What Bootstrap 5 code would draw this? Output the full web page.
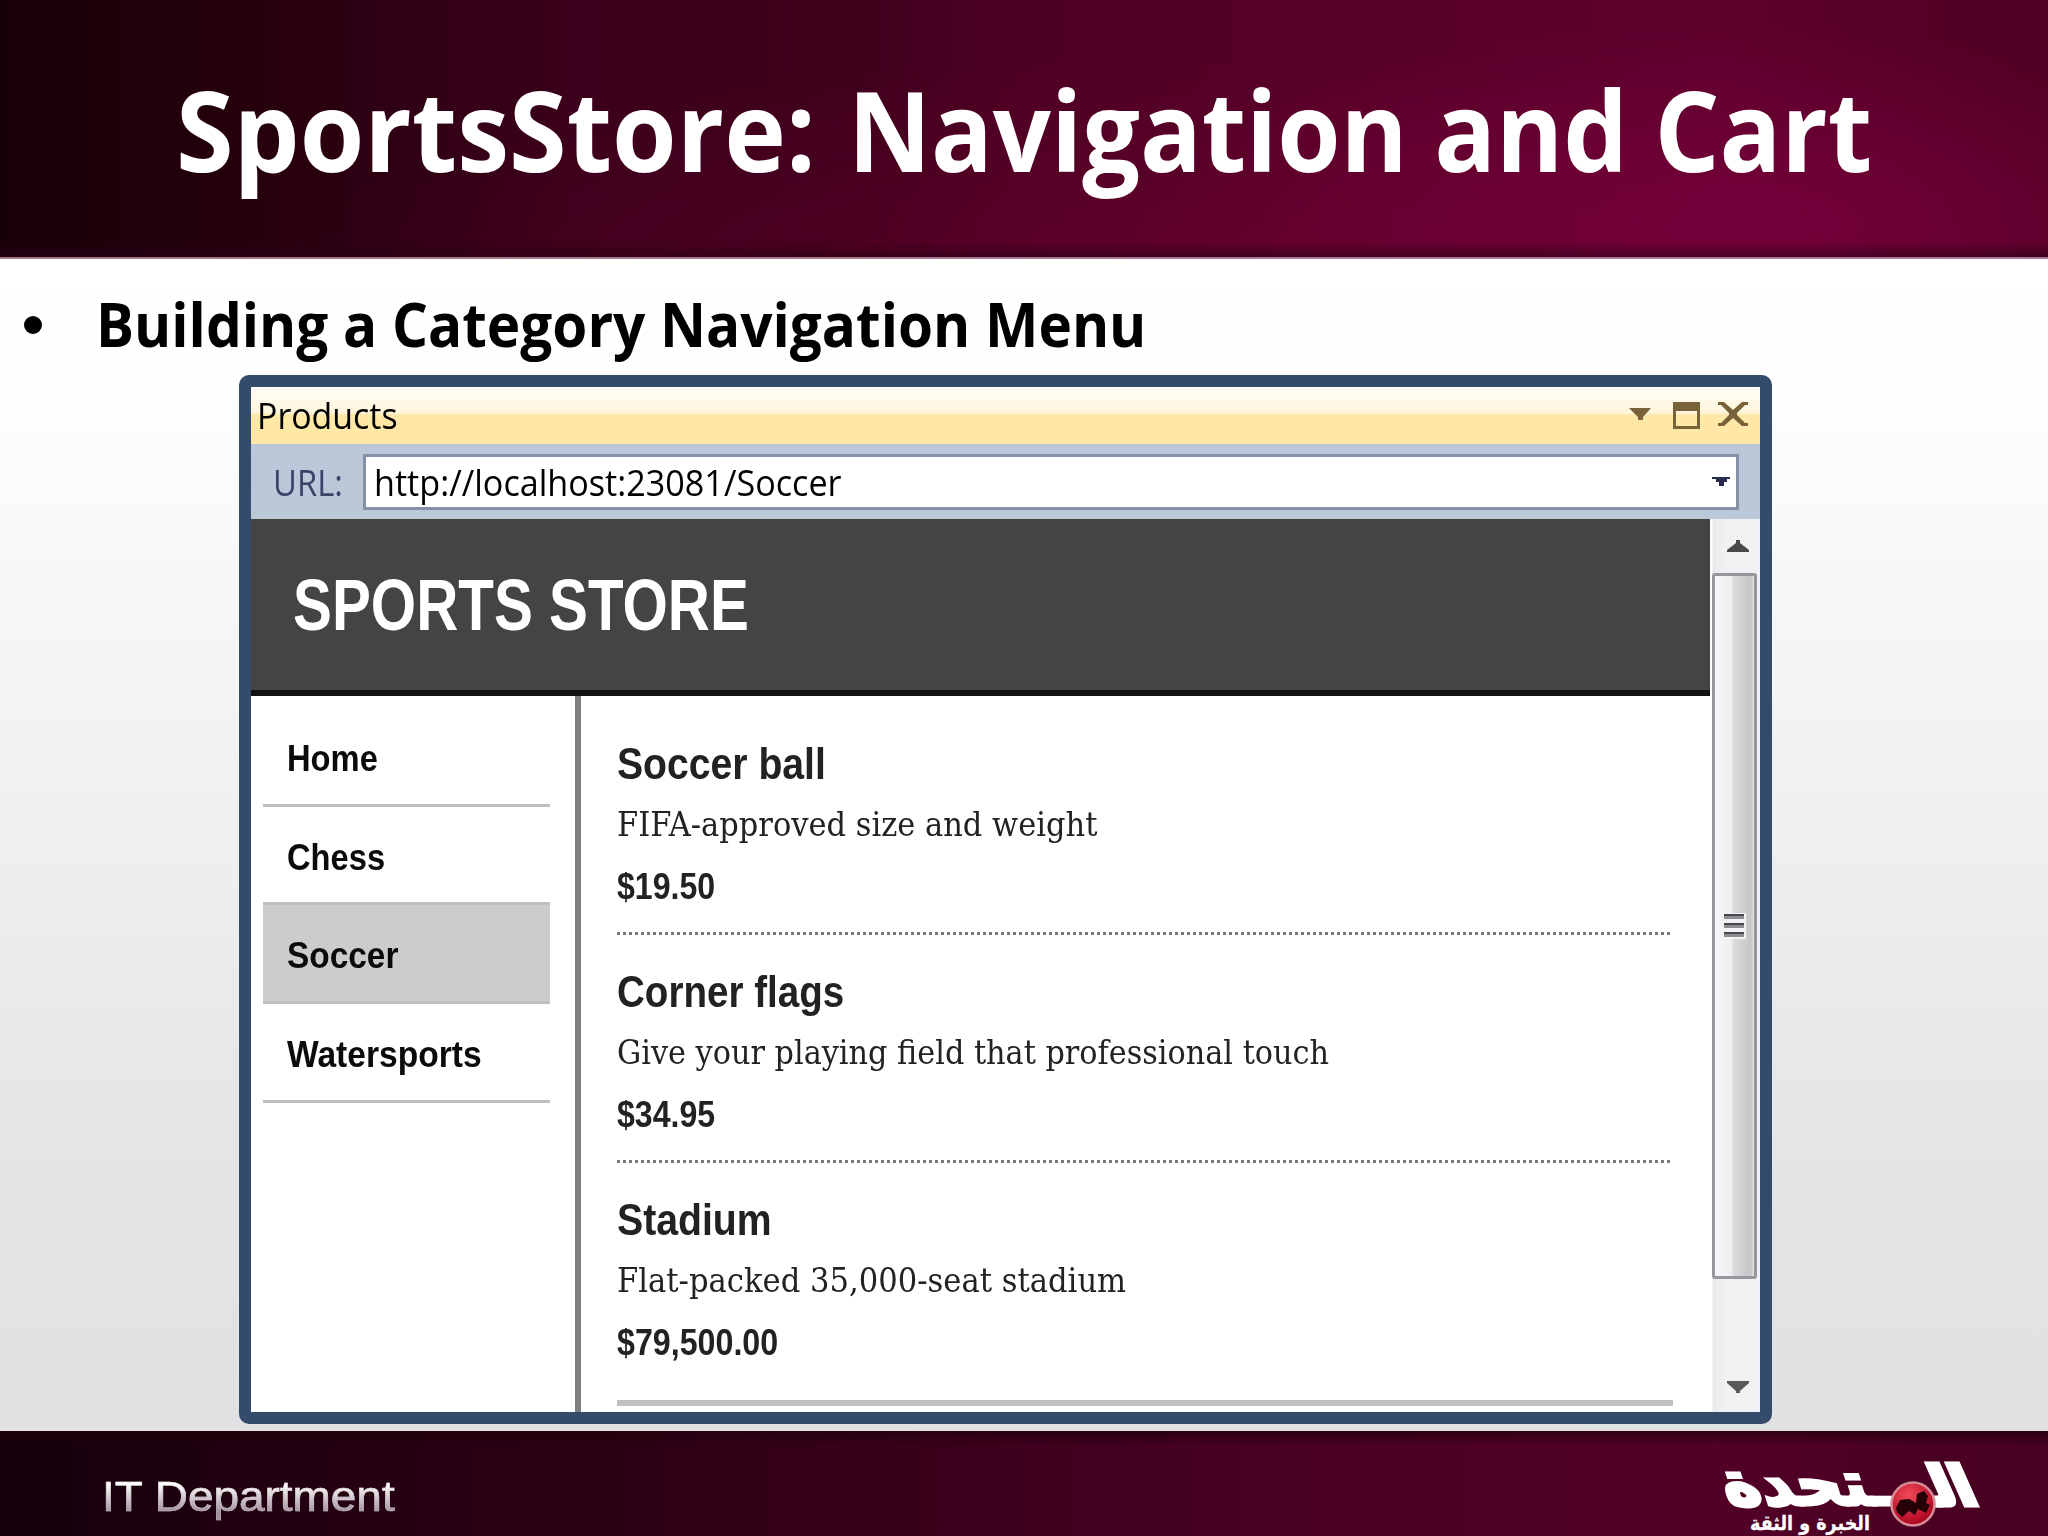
<!DOCTYPE html>
<html lang="en">
<head>
<meta charset="utf-8">
<title>SportsStore: Navigation and Cart</title>
<link href="https://cdn.jsdelivr.net/npm/bootstrap@5.3.0/dist/css/bootstrap.min.css" rel="stylesheet">
<style>
html,body{width:2048px;height:1536px;overflow:hidden}
body{font-family:"Liberation Sans",Arial,sans-serif;color:#000}
.fit{display:inline-block;white-space:nowrap;transform-origin:0 50%}
.slide-head{height:259px;border-bottom:2px solid #a57a8f;background:
 linear-gradient(180deg,transparent 94%,rgba(40,0,20,.55) 100%),
 radial-gradient(ellipse 620px 200px at 1760px 225px,rgba(128,0,66,.65),transparent),
 radial-gradient(ellipse 900px 200px at 1200px 255px,rgba(110,0,45,.45),transparent),
 linear-gradient(90deg,#18000a 0,#28000f 14%,#3b001b 28%,#3f001c 42%,#4d0023 50%,#570029 65%,#5e002c 84%,#4f0022 100%);
 padding-left:176px}
.slide-title{font:bold 112px/258px "Open Sans","Noto Sans",sans-serif;color:#fff;margin:0}
.slide-main{height:1172px;background:linear-gradient(180deg,#fff 0,#fefefe 12%,#f8f7fa 25%,#efeef1 50%,#e5e4e6 75%,#e1e0e2 100%)}
.bullet-row{height:116px;padding:15px 0 0 24px;font:bold 60px/101px "Open Sans","Noto Sans",sans-serif}
.bullet-dot{width:18px;height:18px;background:#000;margin-right:54px}
.app-window{width:1533px;height:1049px;margin-left:239px;border:12px solid #354b6b;border-radius:10px;background:#fff;overflow:hidden}
.win-title{height:57px;padding-left:6px;font:37px/56px "Open Sans","Noto Sans",sans-serif;background:linear-gradient(180deg,#fffdf8 0,#fff5da 45%,#ffe8a6 50%,#ffe7a5 100%)}
.url-bar{height:75px;padding:0 21px 0 22px;font:37px/75px "Open Sans","Noto Sans",sans-serif;background:linear-gradient(180deg,#bcc7d9,#bac8d8)}
.url-label{width:90px;color:#3b4468}
.url-field{height:56px;line-height:50px;border:3px solid #8490a4;background:#fff;padding:0 6px 0 8px}
.page-col{width:1459px}
.store-head{height:177px;border-bottom:6px solid #121113;background:#444443;color:#fff;padding-left:42px;font:bold 72px/173px "Liberation Sans",Arial,sans-serif}
.side-nav{width:330px;border-right:6px solid #7e7e81;padding:12px 25px 0 12px}
.side-nav a{height:98.7px;border-bottom:3px solid #bfbfbf;padding:2px 0 0 24px;font-weight:bold;font-size:37px;line-height:97px;color:#0b0b0b;text-decoration:none}
.side-nav a.active{background:#cdcbcd;box-shadow:0 -3px #bfbfbf}
.products{padding:11px 37px 0 36px}
.product{height:228px;padding-top:33px;color:#222}
.product.ruled{background:repeating-linear-gradient(90deg,#77777a 0 3px,#fff 3px 6px) left bottom/100% 3px no-repeat}
.product h2{font-size:44px;font-weight:bold;line-height:48px;margin:0}
.product p{font:34px/73px "DejaVu Serif",serif;margin:0}
.product .price{font-weight:bold;font-size:37px;line-height:52px}
.total-rule{height:6px;background:#c0bfc1;margin-top:9px}
.scroll-col{width:50px;padding:0 3px 0 2px;background:linear-gradient(90deg,#fff 0 2px,#e9e8ea 3px,#f1f0f2 14px,#f1f0f2 44px,#eef2fc 50px)}
.scroll-thumb{height:706px;border:3px solid #97979b;border-radius:3px;background:linear-gradient(90deg,#f7f6f8 0,#eeedf0 42%,#dad9dc 48%,#c6c5c8 92%,#e8e8ea 100%)}
.slide-foot{height:105px;padding-left:102px;background:
 linear-gradient(180deg,rgba(30,0,10,.65) 0,transparent 14%),
 linear-gradient(90deg,#14000a 0,#22000f 14%,#2c0013 30%,#3c001c 48%,#4c0024 68%,#520027 84%,#460020 100%)}
.dept-box{padding-top:40px}
.dept{font-size:42px;line-height:52px;background:linear-gradient(180deg,#fff 25%,#a08f99 80%);-webkit-background-clip:text;color:transparent;-webkit-text-stroke:.6px rgba(225,210,218,.6)}
</style>
<script src="https://cdn.jsdelivr.net/npm/bootstrap@5.3.0/dist/js/bootstrap.bundle.min.js"></script>
</head>
<body class="d-flex flex-column m-0">
<header class="slide-head flex-shrink-0"><h1 class="slide-title d-flex"><span class="fit" data-w="640" data-step="672">SportsStore:</span><span class="fit" data-w="1024">Navigation and Cart</span></h1></header>
<main class="slide-main flex-shrink-0">
  <div class="bullet-row d-flex align-items-center"><span class="bullet-dot rounded-circle"></span><span class="fit" data-w="1050">Building a Category Navigation Menu</span></div>
  <section class="app-window d-flex flex-column">
    <div class="win-title d-flex justify-content-between">
      <span class="fit" data-w="141">Products</span>
      <svg width="140" height="57" viewBox="0 0 140 57" fill="#776239"><path d="M9 21h22L23 30v3h-5v-3z"/><path fill-rule="evenodd" d="M53 15h27v27H53zM56 24v15h21V24z"/><path d="M98 15h6l9 8 9-8h6v3h-3l-8 8v2l8 8h3v3h-6l-9-8-9 8h-6v-3h3l8-8v-2l-8-8h-3z"/></svg>
    </div>
    <div class="url-bar d-flex align-items-center">
      <div class="url-label"><span class="fit" data-w="70">URL:</span></div>
      <div class="url-field d-flex flex-grow-1 justify-content-between align-items-center"><span class="fit" data-w="468">http://localhost:23081/Soccer</span><svg width="18" height="9" viewBox="0 0 18 9"><path d="M0 0h18v2h-3v3h-3v4H7V5H4V2H0z" fill="#2a2b50"/></svg></div>
    </div>
    <div class="d-flex flex-grow-1">
      <div class="page-col d-flex flex-column">
        <div class="store-head"><span class="fit" data-w="456">SPORTS STORE</span></div>
        <div class="d-flex flex-grow-1">
          <nav class="side-nav d-flex flex-column">
            <a href="#" class="d-block"><span class="fit" data-w="91">Home</span></a>
            <a href="#" class="d-block"><span class="fit" data-w="98">Chess</span></a>
            <a href="#" class="d-block active"><span class="fit" data-w="111">Soccer</span></a>
            <a href="#" class="d-block"><span class="fit" data-w="195">Watersports</span></a>
          </nav>
          <div class="products flex-grow-1">
            <article class="product ruled"><h2><span class="fit" data-w="209">Soccer ball</span></h2><p><span class="fit" data-w="480">FIFA-approved size and weight</span></p><div class="price"><span class="fit" data-w="98">$19.50</span></div></article>
            <article class="product ruled"><h2><span class="fit" data-w="227">Corner flags</span></h2><p><span class="fit" data-w="712">Give your playing field that professional touch</span></p><div class="price"><span class="fit" data-w="98">$34.95</span></div></article>
            <article class="product"><h2><span class="fit" data-w="155">Stadium</span></h2><p><span class="fit" data-w="509">Flat-packed 35,000-seat stadium</span></p><div class="price"><span class="fit" data-w="161">$79,500.00</span></div></article>
            <div class="total-rule"></div>
          </div>
        </div>
      </div>
      <div class="scroll-col d-flex flex-column">
        <svg width="45" height="54" viewBox="0 0 45 54"><path d="M24 21h4v3l9 7v2H15v-2l9-7z" fill="#4a4a4c"/></svg>
        <div class="scroll-thumb d-flex justify-content-center align-items-center"><svg width="23" height="26" viewBox="0 0 23 26"><path d="M0 0h23v26H0z" fill="#f3f2f4"/><path d="M1 1h20v5H1zM1 10h20v5H1zM1 19h20v5H1z" fill="#8d8c90"/><path d="M1 1h20v2H1zM1 10h20v2H1zM1 19h20v2H1z" fill="#48474a"/></svg></div>
        <svg width="45" height="133" viewBox="0 0 45 133"><path d="M15 102h22v2l-9 8v2h-4v-2l-9-8z" fill="#59585b"/></svg>
      </div>
    </div>
  </section>
</main>
<footer class="slide-foot flex-shrink-0 d-flex justify-content-between">
  <div class="dept-box"><span class="fit dept" data-w="293">IT Department</span></div>
  <svg width="388" height="105" viewBox="1660 1431 388 105">
    <defs><radialGradient id="ball" cx=".4" cy=".3" r=".75"><stop offset="0" stop-color="#f04a58"/><stop offset="1" stop-color="#a8001c"/></radialGradient></defs>
    <g fill="#fff" font-family="DejaVu Sans" font-weight="bold" direction="rtl" stroke="#fff">
      <text transform="translate(1896 1505) skewX(18) scale(1 1.25)" x="0" y="0" font-size="50" stroke-width="2.5" textLength="168" lengthAdjust="spacingAndGlyphs">ـتحدة</text>
      <text transform="translate(1981 1505) skewX(24)" x="0" y="0" font-size="54" stroke-width="5" textLength="62" lengthAdjust="spacingAndGlyphs">الـ</text>
      <text x="1870" y="1530" font-size="20" stroke-width=".3" textLength="120" lengthAdjust="spacingAndGlyphs">الخبرة و الثقة</text>
    </g>
    <circle cx="1913" cy="1504" r="21.5" fill="url(#ball)" stroke="#d58a95" stroke-width="2.5"/>
    <path d="M1896 1508l4-8 9-1 7 4 1-9 7-3 4 5-2 7 4 2-4 8-8-4-3 6-6-4-7 6-5-5z" fill="#250007"/>
  </svg>
</footer>
<script>
// Condense each label horizontally to its set width; data-step also fixes its advance.
document.querySelectorAll('.fit').forEach(function(el){
  var w=el.offsetWidth;
  el.style.transform='scaleX('+(el.dataset.w/w)+')';
  if(el.dataset.step) el.style.marginRight=(el.dataset.step-w)+'px';
});
</script>
</body>
</html>
